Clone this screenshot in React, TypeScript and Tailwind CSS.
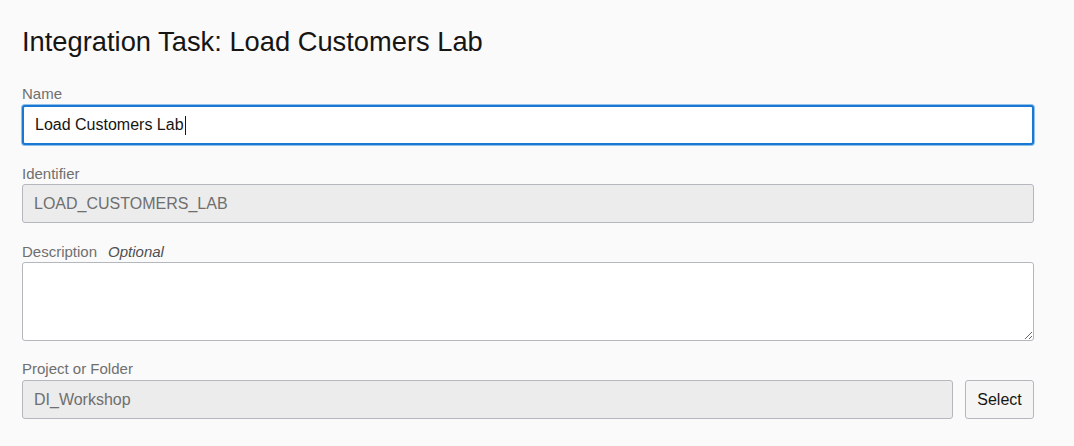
export default function App() {
  const font = { fontFamily: '"Liberation Sans", Arial, sans-serif' };
  return (
    <div
      className="min-h-screen w-full bg-[#fafafa] pl-[22px] pr-[40px] pt-[26px] text-[#161513]"
      style={font}
    >
      <h1 className="text-[27.3px] leading-[32px] font-normal">
        Integration Task: Load Customers Lab
      </h1>

      {/* Name */}
      <div className="mt-[27px]">
        <label className="block text-[15px] leading-[18px] text-[#6f6f6f]">Name</label>
        <div className="mt-[2px] flex h-[40px] items-center rounded-[3px] border-2 border-[#1a77d2] bg-white px-[11px] text-[16px] text-[#161513] ring-1 ring-[#8fc0ec]">
          <span>Load Customers Lab</span>
          <span className="ml-px inline-block h-[19px] w-px bg-[#161513]" />
        </div>
      </div>

      {/* Identifier */}
      <div className="mt-[20px]">
        <label className="block text-[15px] leading-[18px] text-[#6f6f6f]">Identifier</label>
        <div className="mt-px flex h-[39px] items-center rounded-[3px] border border-[#b4b8be] bg-[#ececec] px-[11px] text-[16px] text-[#6f6f6f]">
          LOAD_CUSTOMERS_LAB
        </div>
      </div>

      {/* Description */}
      <div className="mt-[20px]">
        <label className="flex text-[15px] leading-[18px] text-[#6f6f6f]">
          Description
          <span className="ml-[11px] italic text-[#505050]">Optional</span>
        </label>
        <textarea
          className="mt-px block h-[79px] w-full resize-y rounded-[3px] border border-[#b4b8be] bg-white px-[11px] py-2 text-[16px] outline-none"
          style={font}
        />
      </div>

      {/* Project or Folder */}
      <div className="mt-[19px]">
        <label className="block text-[15px] leading-[18px] text-[#6f6f6f]">Project or Folder</label>
        <div className="mt-[2px] flex gap-[12px]">
          <div className="flex h-[39px] flex-1 items-center rounded-[3px] border border-[#b4b8be] bg-[#ececec] px-[11px] text-[16px] text-[#6f6f6f]">
            DI_Workshop
          </div>
          <button
            className="h-[39px] w-[69px] rounded-[3px] border border-[#b4b8be] bg-[#f5f5f5] text-[16px] text-[#161513]"
            style={font}
          >
            Select
          </button>
        </div>
      </div>
    </div>
  );
}
